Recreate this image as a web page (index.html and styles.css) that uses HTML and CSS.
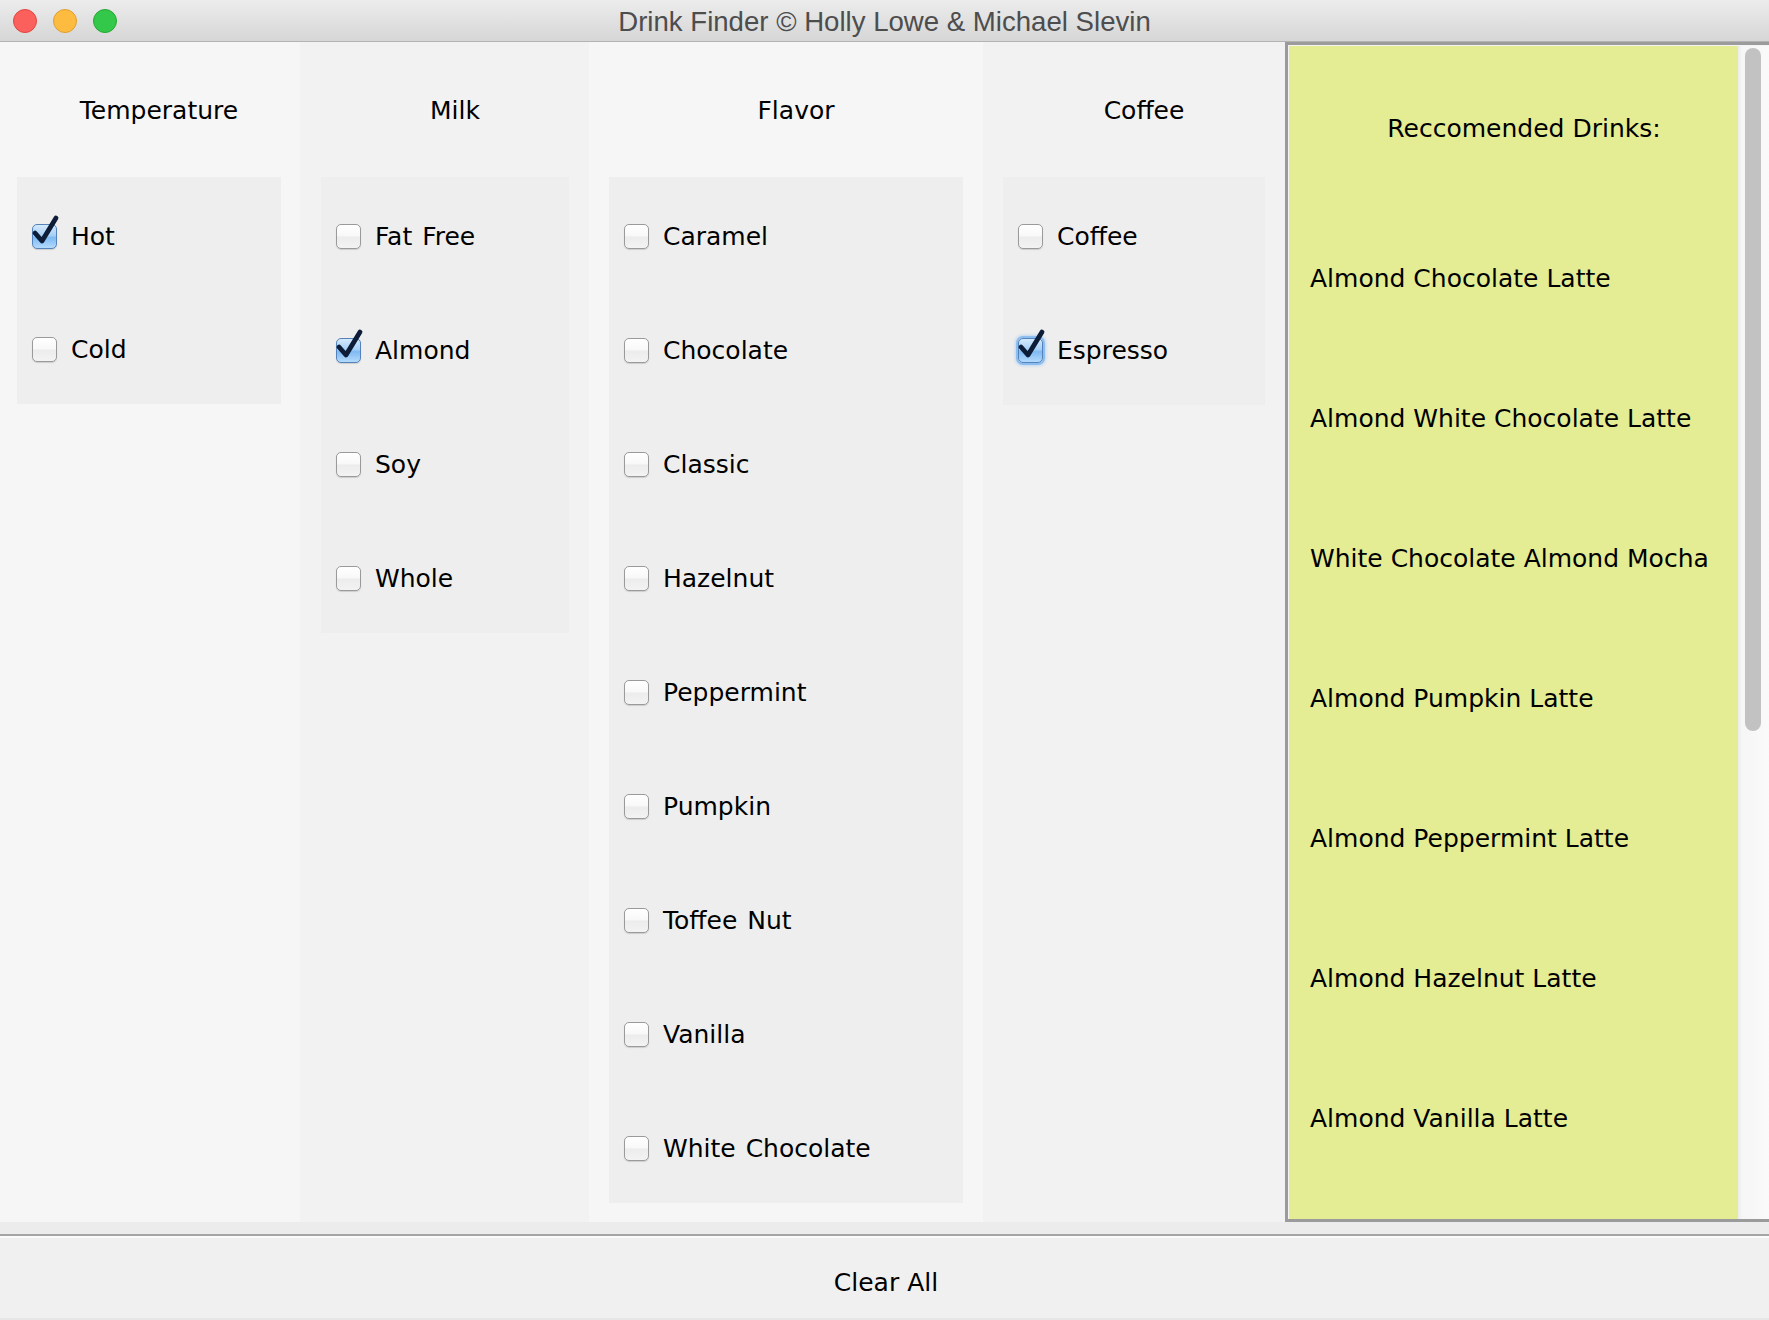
FILE: index.html
```html
<!DOCTYPE html>
<html lang="en">
<head>
<meta charset="utf-8">
<title>Drink Finder</title>
<link rel="stylesheet" href="styles.css">
</head>
<body>
<div class="window">
  <header class="titlebar">
    <div class="lights">
      <span class="light red"></span>
      <span class="light yellow"></span>
      <span class="light green"></span>
    </div>
    <div class="title">Drink Finder © Holly Lowe &amp; Michael Slevin</div>
  </header>

  <main class="main">
    <section class="col col-light col-temp">
      <h2 class="col-head">Temperature</h2>
      <div class="box box-temp">
        <label class="row"><span class="cb checked"><svg class="tick" viewBox="0 0 30 32" width="30" height="32"><polyline points="4,18 11,26 25,3"/></svg></span><span class="lbl">Hot</span></label>
        <label class="row"><span class="cb"></span><span class="lbl">Cold</span></label>
      </div>
    </section>

    <section class="col col-dark col-milk">
      <h2 class="col-head">Milk</h2>
      <div class="box">
        <label class="row"><span class="cb"></span><span class="lbl">Fat Free</span></label>
        <label class="row"><span class="cb checked"><svg class="tick" viewBox="0 0 30 32" width="30" height="32"><polyline points="4,18 11,26 25,3"/></svg></span><span class="lbl">Almond</span></label>
        <label class="row"><span class="cb"></span><span class="lbl">Soy</span></label>
        <label class="row"><span class="cb"></span><span class="lbl">Whole</span></label>
      </div>
    </section>

    <section class="col col-light col-flavor">
      <h2 class="col-head">Flavor</h2>
      <div class="box">
        <label class="row"><span class="cb"></span><span class="lbl">Caramel</span></label>
        <label class="row"><span class="cb"></span><span class="lbl">Chocolate</span></label>
        <label class="row"><span class="cb"></span><span class="lbl">Classic</span></label>
        <label class="row"><span class="cb"></span><span class="lbl">Hazelnut</span></label>
        <label class="row"><span class="cb"></span><span class="lbl">Peppermint</span></label>
        <label class="row"><span class="cb"></span><span class="lbl">Pumpkin</span></label>
        <label class="row"><span class="cb"></span><span class="lbl">Toffee Nut</span></label>
        <label class="row"><span class="cb"></span><span class="lbl">Vanilla</span></label>
        <label class="row"><span class="cb"></span><span class="lbl">White Chocolate</span></label>
      </div>
    </section>

    <section class="col col-dark col-coffee">
      <h2 class="col-head">Coffee</h2>
      <div class="box">
        <label class="row"><span class="cb"></span><span class="lbl">Coffee</span></label>
        <label class="row"><span class="cb checked focus"><svg class="tick" viewBox="0 0 30 32" width="30" height="32"><polyline points="4,18 11,26 25,3"/></svg></span><span class="lbl">Espresso</span></label>
      </div>
    </section>

    <section class="results">
      <div class="results-view">
        <h2 class="results-head">Reccomended Drinks:</h2>
        <ul class="drinks">
          <li>Almond Chocolate Latte</li>
          <li>Almond White Chocolate Latte</li>
          <li>White Chocolate Almond Mocha</li>
          <li>Almond Pumpkin Latte</li>
          <li>Almond Peppermint Latte</li>
          <li>Almond Hazelnut Latte</li>
          <li>Almond Vanilla Latte</li>
        </ul>
      </div>
      <div class="scrollbar"><div class="thumb"></div></div>
    </section>
  </main>

  <div class="band"></div>
  <footer class="footer">
    <button class="clear">Clear All</button>
  </footer>
</div>
</body>
</html>
```

FILE: styles.css
```css
* { box-sizing: border-box; }

html, body {
  margin: 0;
  padding: 0;
  background: #f0f0f0;
}

.window {
  width: 1769px;
  height: 1320px;
  display: flex;
  flex-direction: column;
  overflow: hidden;
  font-family: "DejaVu Sans", "Liberation Sans", sans-serif;
  color: #000;
}

/* ---------- title bar ---------- */
.titlebar {
  height: 42px;
  flex: 0 0 42px;
  position: relative;
  background: linear-gradient(#ececec, #d6d6d6);
  border-bottom: 1px solid #b3b3b3;
  display: flex;
  align-items: center;
  justify-content: center;
}

.lights {
  position: absolute;
  left: 13px;
  top: 9px;
  display: flex;
  gap: 16px;
}

.light {
  width: 24px;
  height: 24px;
  border-radius: 50%;
  display: block;
}
.light.red { background: #fc605c; border: 1px solid #e0443e; }
.light.yellow { background: #fdbc40; border: 1px solid #de9e2f; }
.light.green { background: #34c84a; border: 1px solid #24a733; }

.title {
  font-family: "Liberation Sans", Arial, sans-serif;
  font-size: 27.6px;
  color: #4d4d4d;
  line-height: 1;
  padding-top: 3px;
}

/* ---------- main columns ---------- */
.main {
  display: flex;
  height: 1180px;
  flex: 0 0 1180px;
}

.col {
  display: flex;
  flex-direction: column;
  padding: 0 20px;
}
.col-light { background: #f6f6f6; }
.col-dark { background: #f2f2f2; }

.col-temp { width: 300px; padding: 0 19px 0 17px; }
.col-milk { width: 289px; padding: 0 20px 0 21px; }
.col-flavor { width: 394px; }
.col-coffee { width: 302px; }

.col-head {
  height: 135px;
  margin: 0;
  display: flex;
  align-items: center;
  justify-content: center;
  padding-left: 20px;
  font-size: 25px;
  font-weight: normal;
  padding-top: 2px;
}

.box {
  background: #eeeeee;
  display: flex;
  flex-direction: column;
}

.row {
  height: 114px;
  display: flex;
  align-items: center;
  padding-left: 15px;
  padding-top: 4px;
  gap: 14px;
  font-size: 25px;
}
.box-temp .row:last-child { height: 113px; }

.lbl { line-height: 1; word-spacing: 2px; }

/* ---------- checkboxes ---------- */
.cb {
  position: relative;
  width: 25px;
  height: 25px;
  flex: 0 0 25px;
  border: 1px solid #9a9a9a;
  border-radius: 5px;
  background: linear-gradient(#ffffff 0%, #f8f8f8 48%, #ececec 52%, #f3f3f3 100%);
  box-shadow: 0 1px 1px rgba(0, 0, 0, 0.14);
}

.cb.checked {
  border-color: #5482bb;
  background: linear-gradient(#d4e9fc 0%, #a7d0f7 45%, #7fb9f2 55%, #b3dafc 100%);
}

.cb.focus {
  box-shadow: 0 0 0 2px rgba(120, 180, 240, 0.75), 0 0 3px 3px rgba(120, 180, 240, 0.4);
}

.tick {
  position: absolute;
  left: -2px;
  top: -10px;
  overflow: visible;
}
.tick polyline {
  fill: none;
  stroke: #0d1d37;
  stroke-width: 4.8;
  stroke-linecap: round;
  stroke-linejoin: round;
}

/* ---------- results ---------- */
.results {
  flex: 1;
  display: flex;
  border: 3px solid #9b9b9b;
  border-right: 0;
  padding: 1px 0 0 1px;
  background: #f4f4f4;
}

.results-view {
  flex: 1;
  background: #e4ec94;
  display: flex;
  flex-direction: column;
}

.results-head {
  height: 162px;
  margin: 0;
  display: flex;
  align-items: center;
  justify-content: center;
  padding-left: 21px;
  padding-top: 2px;
  font-size: 25px;
  font-weight: normal;
}

.drinks {
  list-style: none;
  margin: 0;
  padding: 0 0 0 21px;
}
.drinks li {
  height: 140px;
  display: flex;
  align-items: center;
  font-size: 25px;
  padding-top: 1px;
}

.scrollbar {
  width: 31px;
  flex: 0 0 31px;
  background: linear-gradient(90deg, #ebebeb 0, #f6f6f6 4px, #fafafa 100%);
  padding: 2px 0 0 7px;
}
.thumb {
  width: 16px;
  height: 683px;
  border-radius: 8px;
  background: #c2c2c2;
}

/* ---------- footer ---------- */
.band {
  height: 12px;
  flex: 0 0 12px;
  background: #ececec;
}

.footer {
  flex: 1;
  border-top: 2px solid #a5a5a5;
  box-shadow: inset 0 2px 0 #fbfbfb;
  border-bottom: 2px solid #e6e6e6;
  background: #f0f0f0;
  display: flex;
  align-items: center;
  justify-content: center;
  padding-top: 10px;
}

.clear {
  font-family: "DejaVu Sans", "Liberation Sans", sans-serif;
  font-size: 25px;
  background: none;
  border: 0;
  padding: 0;
  color: #000;
  margin-left: 3px;
}
```
